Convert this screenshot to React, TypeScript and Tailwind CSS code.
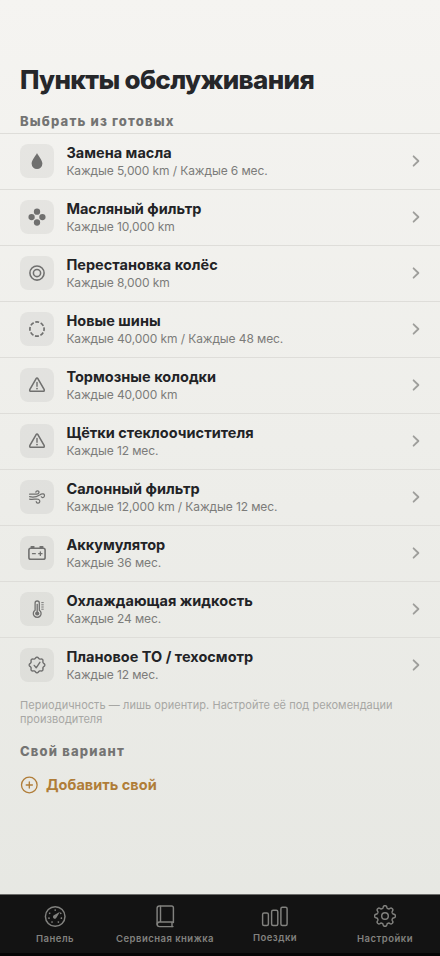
import React, { ReactNode } from "react";

type IconName =
  | "drop"
  | "dots"
  | "rings"
  | "dashed"
  | "warning"
  | "wind"
  | "battery"
  | "thermometer"
  | "seal";

interface ServiceItem {
  title: string;
  interval: string;
  icon: IconName;
}

const items: ServiceItem[] = [
  { title: "Замена масла", interval: "Каждые 5,000 km / Каждые 6 мес.", icon: "drop" },
  { title: "Масляный фильтр", interval: "Каждые 10,000 km", icon: "dots" },
  { title: "Перестановка колёс", interval: "Каждые 8,000 km", icon: "rings" },
  { title: "Новые шины", interval: "Каждые 40,000 km / Каждые 48 мес.", icon: "dashed" },
  { title: "Тормозные колодки", interval: "Каждые 40,000 km", icon: "warning" },
  { title: "Щётки стеклоочистителя", interval: "Каждые 12 мес.", icon: "warning" },
  { title: "Салонный фильтр", interval: "Каждые 12,000 km / Каждые 12 мес.", icon: "wind" },
  { title: "Аккумулятор", interval: "Каждые 36 мес.", icon: "battery" },
  { title: "Охлаждающая жидкость", interval: "Каждые 24 мес.", icon: "thermometer" },
  { title: "Плановое ТО / техосмотр", interval: "Каждые 12 мес.", icon: "seal" },
];

// closed outline with eight evenly spaced teeth, the first one pointing up
function toothedPath(c: number, radius: number, depth: number, hardness: number) {
  const steps = 192;
  const points: string[] = [];
  for (let i = 0; i < steps; i++) {
    const a = (i / steps) * Math.PI * 2;
    const wave = Math.tanh(hardness * Math.cos(8 * a)) / Math.tanh(hardness);
    const r = radius + depth * wave;
    points.push(`${(c + r * Math.sin(a)).toFixed(2)} ${(c - r * Math.cos(a)).toFixed(2)}`);
  }
  return `M${points.join("L")}Z`;
}

const glyphs: Record<IconName, ReactNode> = {
  drop: (
    <path
      d="M10 2C9.3 4.2 4.6 8.8 4.6 12.6A5.4 5.4 0 0 0 15.4 12.6C15.4 8.8 10.7 4.2 10 2Z"
      fill="currentColor"
      stroke="none"
    />
  ),
  dots: (
    <g fill="currentColor" stroke="none">
      <circle cx="10" cy="4.7" r="3.15" />
      <circle cx="4.6" cy="10.1" r="3.15" />
      <circle cx="15.4" cy="10.1" r="3.15" />
      <circle cx="10" cy="15.5" r="3.15" />
    </g>
  ),
  rings: (
    <>
      <circle cx="10" cy="10" r="7.1" />
      <circle cx="10" cy="10" r="3.6" />
    </>
  ),
  dashed: <circle cx="10" cy="10" r="7.1" strokeWidth="1.7" strokeDasharray="3.9 1.676" strokeDashoffset="1.95" strokeLinecap="butt" />,
  warning: (
    <>
      <path d="M9 3.8Q10 2.3 11 3.8L17.1 14.4Q17.8 16.2 16 16.3H4Q2.2 16.2 2.9 14.4Z" />
      <path d="M10 7.4V11.2" strokeWidth="1.4" />
      <circle cx="10" cy="13.6" r=".9" fill="currentColor" stroke="none" />
    </>
  ),
  wind: (
    <g strokeWidth="1.2">
      <path d="M2.6 7.2H9.6C12.4 7.2 12.8 3.9 10.5 3.9C9.5 3.9 8.9 4.5 8.8 5.2" />
      <path d="M2.6 9.7C7 10.9 9.6 10 12.6 8C15.2 6 18 6.6 17.4 9.1C16.9 11 14.9 10.9 14.3 9.8" />
      <path d="M2.6 12.1C6 12.8 9 11.6 11.3 12.3C13.8 13.2 13 16.4 10.8 16.2C9.8 16.1 9.3 15.4 9.2 14.7" />
    </g>
  ),
  battery: (
    <>
      <rect x="1.9" y="5.2" width="16.2" height="11" rx="1.8" strokeWidth="1.6" />
      <path d="M4.4 4.1H6.7M13.3 4.1H15.6" strokeWidth="2" />
      <path d="M5.5 10.7H8.3M11.7 10.7H15M13.35 9V12.4" strokeWidth="1.3" />
    </>
  ),
  thermometer: (
    <>
      <path d="M8.1 11.2V4.1A2.1 2.1 0 0 1 12.3 4.1V11.2A3.9 3.9 0 1 1 8.1 11.2Z" strokeWidth="1.3" />
      <path d="M10.2 5.5V13" strokeWidth="1.3" />
      <circle cx="10.2" cy="14.5" r="2.1" fill="currentColor" stroke="none" />
      <path d="M14.7 3.6H16.3M14.7 5.8H16.3M14.7 8H16.3M14.7 10.2H16.3" strokeWidth=".9" />
    </>
  ),
  seal: (
    <>
      <path d={toothedPath(10, 7.15, 0.65, 0.6)} strokeWidth="1.4" />
      <path d="M7.2 10.4L9.2 12.8L12.9 7.3" strokeWidth="1.4" />
    </>
  ),
};

const Glyph = ({ name }: { name: IconName }) => (
  <svg
    viewBox="0 0 20 20"
    className="size-5"
    fill="none"
    stroke="currentColor"
    strokeWidth="1.55"
    strokeLinecap="round"
    strokeLinejoin="round"
  >
    {glyphs[name]}
  </svg>
);

const ServiceRow = ({ title, interval, icon }: ServiceItem) => (
  <li className="flex h-14 items-center border-t border-[#deddd9] pr-[19px] pb-px pl-5">
    <div className="flex size-[34px] shrink-0 items-center justify-center rounded-lg bg-black/5 text-[#70706f]">
      <Glyph name={icon} />
    </div>
    <div className="ml-[12.4px] flex-1 whitespace-nowrap">
      <h3 className="text-[14.5px] leading-[19px] font-[650] tracking-[0.02px] text-[#222326]">{title}</h3>
      <p className="mt-px text-[12px] leading-4 tracking-[-0.1px] text-[#7c7c7a]">{interval}</p>
    </div>
    <svg viewBox="0 0 10 14" className="h-3.5 w-2.5" fill="none" stroke="#9e9e9b" strokeWidth="1.8" strokeLinecap="round" strokeLinejoin="round">
      <path d="M2.6 2.3L7.4 7L2.6 11.7" />
    </svg>
  </li>
);

const SectionTitle = ({ children }: { children: ReactNode }) => (
  <h2 className="px-5 text-[13px] leading-4 font-extrabold tracking-[1.17px] text-[#747473]">{children}</h2>
);

const ticks = [0, 60, 105, 150, 210, 255, 300];

const GaugeIcon = () => (
  <>
    <circle cx="12.2" cy="12.5" r="9.8" />
    {ticks.map((deg) => (
      <circle key={deg} cx="12.2" cy="6.1" r=".85" fill="currentColor" stroke="none" transform={`rotate(${deg} 12.2 12.5)`} />
    ))}
    <path d="M17 7.7L13.7 13.3A1.9 1.9 0 1 1 11.3 11Z" fill="currentColor" stroke="none" />
  </>
);

const BookIcon = () => (
  <>
    <path d="M20.4 18.5V3.8Q20.4 2 18.6 2H6.4Q4.1 2 4.1 4.3V20Q4.1 22.6 6.6 22.6H20" />
    <path d="M7.5 2.2V17.8M20 18H6.5Q4.2 18.1 4.2 20.2M19 18.2V22.4" />
  </>
);

const BarsIcon = () => (
  <>
    <rect x="-.4" y="9" width="5.8" height="12.4" rx="1.5" />
    <rect x="8.6" y="6.2" width="6.2" height="15.2" rx="1.5" />
    <rect x="17.9" y="3.2" width="6.2" height="18.2" rx="1.5" />
  </>
);

const GearIcon = () => (
  <>
    <path d={toothedPath(12, 9.1, 1.2, 1.8)} />
    <circle cx="12" cy="12" r="3.3" />
  </>
);

const Tab = ({ label, className, children }: { label: string; className: string; children: ReactNode }) => (
  <button className="flex flex-1 flex-col items-center pt-[9px]">
    <svg
      viewBox="0 0 24 24"
      className="size-6 overflow-visible"
      fill="none"
      stroke="currentColor"
      strokeWidth="1.45"
      strokeLinecap="round"
      strokeLinejoin="round"
    >
      {children}
    </svg>
    <span className={`text-[9.5px] leading-3 font-semibold tracking-[0.48px] whitespace-nowrap ${className}`}>{label}</span>
  </button>
);

const App = () => {
  return (
    <div className="flex h-[956px] w-[440px] flex-col overflow-hidden bg-linear-to-b from-[#f5f4f1] to-[#e6e7e2] font-['Inter',sans-serif]">
      <main className="flex-1">
        <h1 className="px-5 pt-16 text-[26px] leading-8 font-extrabold tracking-[-0.67px] whitespace-nowrap text-[#26272a]">
          Пункты обслуживания
        </h1>
        <div className="mt-[17px]">
          <SectionTitle>Выбрать из готовых</SectionTitle>
        </div>
        <ul className="mt-1">
          {items.map((item) => (
            <ServiceRow key={item.title} {...item} />
          ))}
        </ul>
        <p className="px-5 pt-1.5 text-[11px] leading-[13.5px] tracking-[0.05px] text-[#a7a7a4]">
          Периодичность — лишь ориентир. Настройте её под рекомендации
          <br />
          производителя
        </p>
        <div className="mt-[17px]">
          <SectionTitle>Свой вариант</SectionTitle>
        </div>
        <button className="mt-4 flex items-center gap-2 px-5 text-[#b07d38]">
          <svg viewBox="0 0 18 18" className="size-[18px]" fill="none" stroke="currentColor" strokeWidth="1.3" strokeLinecap="round">
            <circle cx="9.3" cy="9" r="7.8" />
            <path d="M9.3 5.9V12.1M6.2 9H12.4" />
          </svg>
          <span className="text-[14.5px] leading-5 font-[650] tracking-[0.02px]">Добавить свой</span>
        </button>
      </main>
      <nav className="flex h-[62px] border-t border-[#6b6b69] bg-[#131313] text-[#82827f] shadow-[inset_0_-3px_0_#050505]">
        <Tab label="Панель" className="mt-[5px]">
          <GaugeIcon />
        </Tab>
        <Tab label="Сервисная книжка" className="mt-[5px]">
          <BookIcon />
        </Tab>
        <Tab label="Поездки" className="mt-1">
          <BarsIcon />
        </Tab>
        <Tab label="Настройки" className="mt-[5px]">
          <GearIcon />
        </Tab>
      </nav>
    </div>
  );
};

export default App;
